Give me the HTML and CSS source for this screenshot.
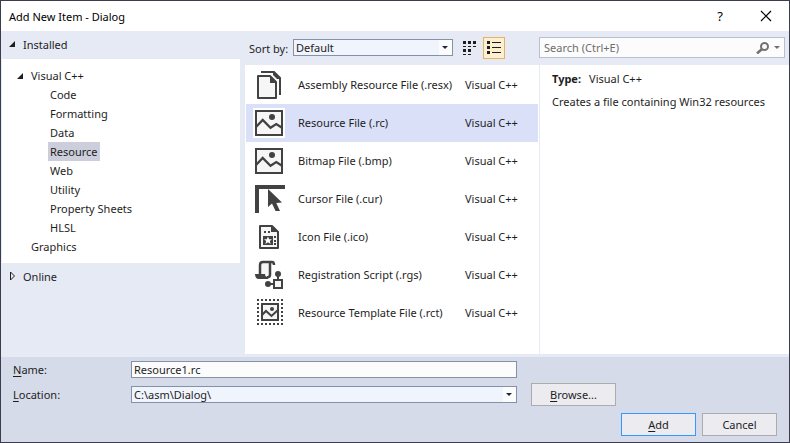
FILE: index.html
```html
<!DOCTYPE html>
<html lang="en">
  <head>
    <meta charset="UTF-8" />
    <meta name="viewport" content="width=device-width, initial-scale=1.0" />
    <title>Add New Item - Dialog</title>
    <link rel="stylesheet" href="styles.css">
  </head>
  <body>
    <svg width="0" height="0" class="defs">
      <symbol id="picture" viewBox="0 0 32 30">
        <rect x="3" y="3" width="26" height="24" fill="#f6f6f6" stroke="#424242" stroke-width="2"></rect>
        <path d="M3 19L9.700 12L17.500 19.700L23.300 16L29 19.700" fill="none" stroke="#424242" stroke-width="2.300"></path>
        <circle cx="19" cy="9" r="3" fill="#424242"></circle>
      </symbol>
    </svg>

    <div class="dialog">
      <header class="title-bar">
        <h1 class="title">Add New Item - Dialog</h1>
        <button class="title-btn" type="button" aria-label="Help">?</button>
        <button class="title-btn" type="button" aria-label="Close">
          <svg width="12" height="12" viewBox="0 0 12 12"><path d="M1 1L11 11M11 1L1 11" stroke="#000" stroke-width="1.200"></path></svg>
        </button>
      </header>

      <main class="main">
        <nav class="sidebar">
          <h2 class="group">
            <svg class="arrow" width="8" height="8"><path d="M7 1V7H1Z" fill="#1e1e1e"></path></svg>Installed
          </h2>
          <ul class="tree">
            <li>
              <span class="node">
                <svg class="arrow" width="8" height="8"><path d="M7 1V7H1Z" fill="#1e1e1e"></path></svg>Visual C++
              </span>
              <ul class="sub-tree">
                <li><span class="leaf">Code</span></li>
                <li><span class="leaf">Formatting</span></li>
                <li><span class="leaf">Data</span></li>
                <li><span class="leaf selected">Resource</span></li>
                <li><span class="leaf">Web</span></li>
                <li><span class="leaf">Utility</span></li>
                <li><span class="leaf">Property Sheets</span></li>
                <li><span class="leaf">HLSL</span></li>
              </ul>
            </li>
            <li><span class="node no-arrow">Graphics</span></li>
          </ul>
          <h2 class="group">
            <svg class="arrow" width="8" height="10"><path d="M2.500 1V9L6.500 5Z" fill="none" stroke="#1e1e1e"></path></svg>Online
          </h2>
        </nav>

        <section class="center">
          <div class="toolbar">
            <label for="sort">Sort by:</label>
            <div class="combo sort">
              <select id="sort">
                <option>Default</option>
              </select>
            </div>
            <button class="view-btn" type="button" aria-label="Medium icons">
              <svg width="14" height="14" fill="#1e1e1e">
                <path d="M0 0h3v3H0zM5 0h3v3H5zM10 0h3v3h-3zM0 8h3v3H0zM5 8h3v3H5z"></path>
                <path d="M0 5h3v1H0zM5 5h3v1H5zM10 5h3v1h-3zM0 13h3v1H0zM5 13h3v1H5z"></path>
              </svg>
            </button>
            <button class="view-btn active" type="button" aria-label="Small icons">
              <svg width="14" height="14" fill="#1e1e1e">
                <path d="M0 0h3v3H0zM0 5h3v3H0zM0 10h3v3H0zM5 1h9v1H5zM5 6h9v1H5zM5 11h9v1H5z"></path>
              </svg>
            </button>
          </div>
          <ul class="items">
            <li class="item">
              <svg class="icon" viewBox="0 0 32 30">
                <path d="M8 2H21L27 8V25" fill="none" stroke="#424242" stroke-width="2"></path>
                <path d="M20 1L28 9H24L20 5Z" fill="#424242"></path>
                <path d="M5 6H17L23 12V28H5Z" fill="#f6f6f6" stroke="#424242" stroke-width="2" stroke-linejoin="round"></path>
                <path d="M17 6V13H24Z" fill="#424242"></path>
              </svg>
              <span class="name">Assembly Resource File (.resx)</span>
              <span class="lang">Visual C++</span>
            </li>
            <li class="item selected">
              <svg class="icon"><use href="#picture"></use></svg>
              <span class="name">Resource File (.rc)</span>
              <span class="lang">Visual C++</span>
            </li>
            <li class="item">
              <svg class="icon"><use href="#picture"></use></svg>
              <span class="name">Bitmap File (.bmp)</span>
              <span class="lang">Visual C++</span>
            </li>
            <li class="item">
              <svg class="icon" viewBox="0 0 32 30" fill="#424242">
                <path d="M2 1H32V5H6V29H2Z"></path>
                <path d="M15 5V23L19 19.500L22.500 27H27L23.300 19L29 18.500Z"></path>
              </svg>
              <span class="name">Cursor File (.cur)</span>
              <span class="lang">Visual C++</span>
            </li>
            <li class="item">
              <svg class="icon" viewBox="0 0 32 30">
                <path d="M7 4H19L25 10V26H7Z" fill="#f6f6f6" stroke="#424242" stroke-width="2" stroke-linejoin="round"></path>
                <path d="M18 3V10H26Z" fill="#424242"></path>
                <path d="M11 9h2v2h-2zM15 9h2v2h-2zM21 14h2v2h-2zM21 18h2v2h-2zM21 21h2v2h-2zM10 14h10v9H10z" fill="#424242"></path>
                <path d="M15 14.500L16.200 17.200H19L16.800 19L17.600 22L15 20.300L12.400 22L13.200 19L11 17.200H13.800Z" fill="#fff"></path>
              </svg>
              <span class="name">Icon File (.ico)</span>
              <span class="lang">Visual C++</span>
            </li>
            <li class="item">
              <svg class="icon" viewBox="0 0 32 30">
                <path d="M8 3H17V15H8Z" fill="#f6f6f6"></path>
                <path d="M7 15V5Q7 2 10 2H19Q21 2 21 5" fill="none" stroke="#424242" stroke-width="2.500"></path>
                <path d="M17 3V15Q17 17 14 17.500" fill="none" stroke="#424242" stroke-width="2.500"></path>
                <path d="M2 14H12Q12 17 15 17V19H6Q2 19 2 14Z" fill="#424242"></path>
                <path d="M25 14V20M15 24H21" stroke="#424242" stroke-width="2"></path>
                <circle cx="25" cy="14" r="3" fill="#424242"></circle>
                <circle cx="15" cy="24" r="3" fill="#424242"></circle>
                <rect x="21" y="20" width="8" height="8" fill="#f6f6f6" stroke="#424242" stroke-width="2"></rect>
              </svg>
              <span class="name">Registration Script (.rgs)</span>
              <span class="lang">Visual C++</span>
            </li>
            <li class="item">
              <svg class="icon" viewBox="0 0 32 30" fill="none" stroke="#424242" stroke-width="2">
                <path d="M4 2H30M4 26H30M5 1V27M29 1V27" stroke-dasharray="2 2"></path>
                <rect x="9" y="6" width="16" height="16" fill="#f6f6f6"></rect>
                <path d="M9 17L13 13L18.500 18L25 12"></path>
                <circle cx="19" cy="11" r="2" fill="#424242" stroke="none"></circle>
              </svg>
              <span class="name">Resource Template File (.rct)</span>
              <span class="lang">Visual C++</span>
            </li>
          </ul>
        </section>

        <section class="details">
          <div class="search">
            <input type="text" placeholder="Search (Ctrl+E)" aria-label="Search" />
            <button class="search-btn" type="button" aria-label="Search">
              <svg width="13" height="12" viewBox="0 0 13 12" fill="none" stroke="#717171">
                <circle cx="8.500" cy="4.500" r="3.500" stroke-width="2"></circle>
                <path d="M6 7L1 11.500" stroke-width="2.500"></path>
              </svg>
              <svg width="6" height="3"><path d="M0 0H6L3 3Z" fill="#717171"></path></svg>
            </button>
          </div>
          <div class="info">
            <p><b class="type">Type:</b>Visual C++</p>
            <p>Creates a file containing Win32 resources</p>
          </div>
        </section>
      </main>

      <footer class="footer">
        <div class="fields">
          <label for="name"><u>N</u>ame:</label>
          <input class="text-box" type="text" id="name" value="Resource1.rc" />
          <label for="location"><u>L</u>ocation:</label>
          <div class="combo">
            <select id="location">
              <option>C:\asm\Dialog\</option>
            </select>
          </div>
          <button class="btn browse" type="button"><u>B</u>rowse...</button>
        </div>
        <div class="actions">
          <button class="btn primary" type="submit"><u>A</u>dd</button>
          <button class="btn" type="button">Cancel</button>
        </div>
      </footer>
    </div>
  </body>
</html>
```

FILE: styles.css
```css
* {
  box-sizing: border-box;
}
body {
  margin: 0;
}
body,
button,
input,
select {
  font-family: 'Noto Sans', 'Open Sans', sans-serif;
  font-size: 11px;
  line-height: 19px;
  color: #1e1e1e;
}
h1,
h2,
p,
ul {
  margin: 0;
  padding: 0;
  font-size: 11px;
  font-weight: normal;
  list-style: none;
}
.defs {
  position: absolute;
}
.dialog {
  min-height: 100vh;
  display: flex;
  flex-direction: column;
  border: 1px solid #3b3d4f;
  background-color: #e6eaf5;
}
/* title bar */
.title-bar {
  height: 30px;
  display: flex;
  align-items: center;
  padding-left: 8px;
  background-color: #fff;
}
.title {
  flex: 1;
  color: #000;
}
.title-btn {
  width: 46px;
  height: 28px;
  display: flex;
  align-items: center;
  justify-content: center;
  padding: 0;
  border: 0;
  background: none;
  font-size: 13px;
  color: #000;
}
.main {
  flex: 1;
  display: grid;
  grid-template-columns: 244px 294px 1fr;
  padding-bottom: 3px;
}
/* left tree */
.group {
  height: 28px;
  display: flex;
  align-items: center;
  gap: 7px;
  padding: 0 0 2px 7px;
}
.tree {
  margin: 0 5px 0 1px;
  padding: 7px 0;
  background-color: #fff;
}
.node {
  display: flex;
  align-items: center;
  gap: 7px;
  padding-left: 14px;
}
.no-arrow {
  padding-left: 29px;
}
.sub-tree {
  padding-left: 46px;
}
.leaf {
  display: inline-block;
  padding: 0 2px;
  vertical-align: top;
}
.leaf.selected {
  background-color: #cccedb;
}
/* item list */
.center {
  display: flex;
  flex-direction: column;
}
.toolbar {
  height: 34px;
  display: flex;
  align-items: center;
  padding-left: 4px;
}
.sort {
  width: 160px;
  margin: 0 6px 2px auto;
}
.view-btn {
  width: 22px;
  height: 22px;
  display: flex;
  align-items: center;
  justify-content: center;
  margin-right: 2px;
  padding: 0;
  border: 1px solid transparent;
  background: none;
}
.view-btn.active {
  margin-right: 34px;
  border-color: #e5b365;
  background-color: #fdf0d0;
}
.items {
  flex: 1;
  padding: 1px 1px 0;
  background-color: #fff;
}
.item {
  height: 38px;
  display: flex;
  align-items: center;
  padding-left: 7px;
}
.item.selected {
  background-color: #d9e0f8;
}
.icon {
  width: 32px;
  height: 30px;
  margin-right: 13px;
}
.item.selected .icon {
  background-color: #fff;
}
.name,
.lang {
  padding-bottom: 2px;
}
.name {
  width: 167px;
}
/* right side */
.details {
  display: flex;
  flex-direction: column;
}
.search {
  height: 21px;
  display: flex;
  margin: 6px 4px 7px 0;
  border: 1px solid #b9bfcf;
  background-color: #fcfcfc;
}
.search input {
  flex: 1;
  min-width: 0;
  padding: 0 4px;
  border: 0;
  background: none;
}
.search input::placeholder {
  color: #6d6d6d;
}
.search-btn {
  display: flex;
  align-items: center;
  gap: 5px;
  padding: 0 4px;
  border: 0;
  background: none;
}
.info {
  flex: 1;
  display: flex;
  flex-direction: column;
  gap: 4px;
  margin-left: 1px;
  padding: 4px 12px;
  background-color: #fff;
}
.type {
  margin-right: 8px;
}
/* bottom */
.footer {
  padding: 3px 12px 6px;
  background-color: #d6dbe9;
}
.fields {
  display: grid;
  grid-template-columns: 118px 386px auto;
  align-items: center;
  justify-content: start;
  row-gap: 4px;
}
.text-box,
.combo {
  height: 17px;
  border: 1px solid #8591a8;
  background-color: #fcfcfc;
}
.text-box {
  padding: 0 2px;
}
.fields .text-box {
  grid-column: 2 / 4;
  width: 386px;
}
.combo {
  position: relative;
}
.combo::after {
  content: '';
  position: absolute;
  right: 4px;
  top: 6px;
  border: 3px solid transparent;
  border-top-color: #1b293e;
  border-bottom: 0;
  pointer-events: none;
}
.combo select {
  width: 100%;
  height: 15px;
  display: block;
  appearance: none;
  padding: 0 2px;
  border: 0;
  border-right: 13px solid #fcfcfc;
  border-radius: 0;
  background-color: #f0f4fd;
  line-height: 15px;
}
.btn {
  width: 75px;
  height: 23px;
  padding: 0;
  border: 1px solid #acacac;
  background-color: #ecebf0;
}
.btn.primary {
  border-color: #3399ff;
}
.browse {
  width: 85px;
  margin-left: 14px;
}
.actions {
  display: flex;
  justify-content: flex-end;
  gap: 6px;
  margin-top: 7px;
}
u {
  text-underline-offset: 2px;
}
```
